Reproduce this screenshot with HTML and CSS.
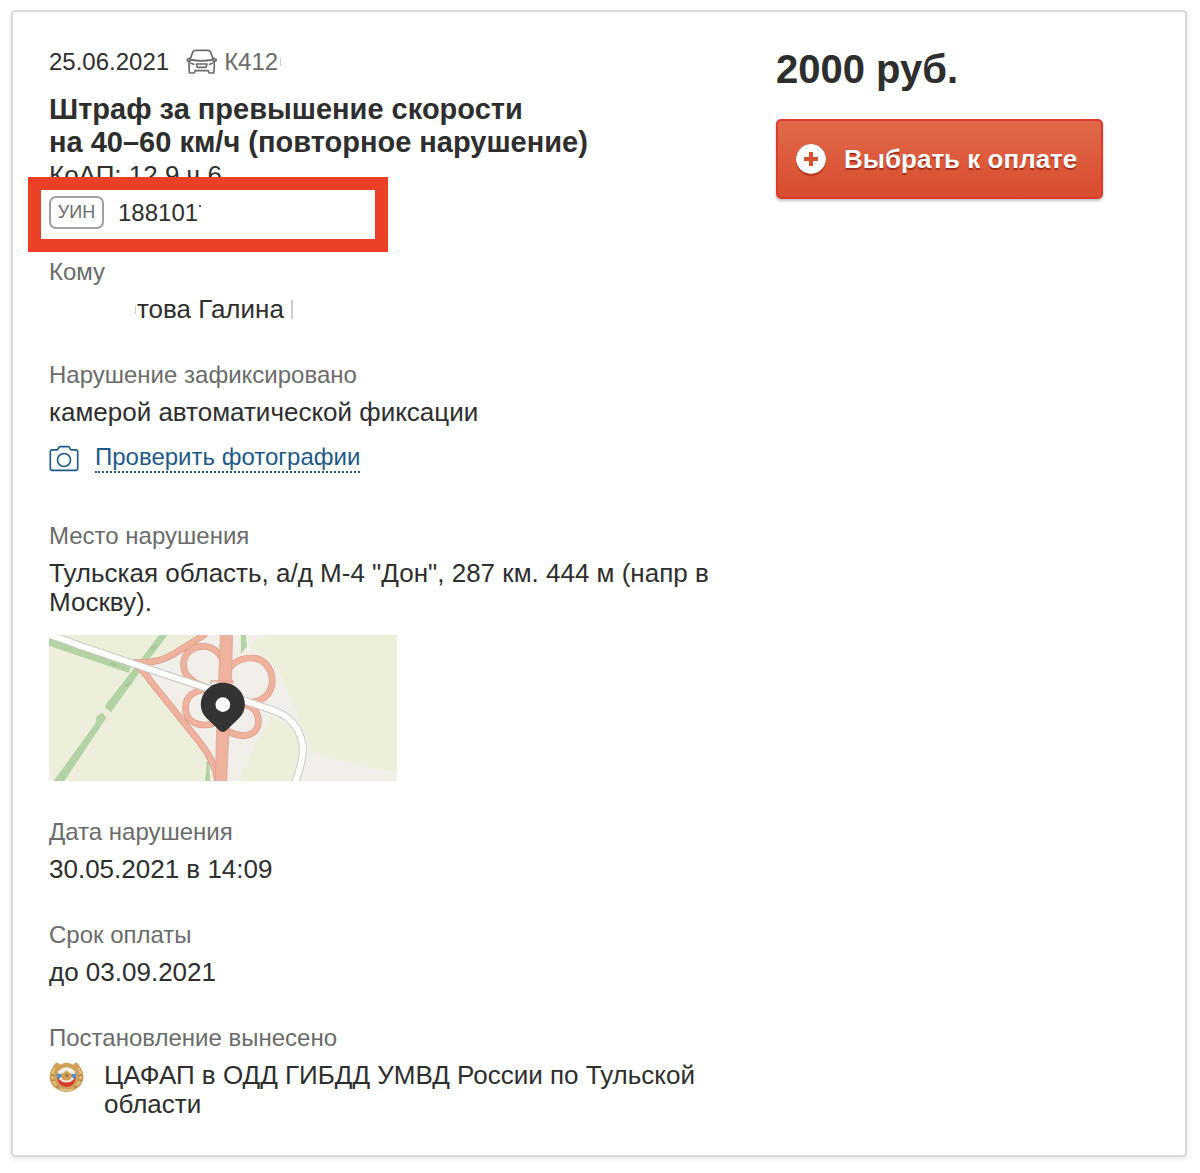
FILE: index.html
```html
<!DOCTYPE html>
<html lang="ru">
<head>
<meta charset="utf-8">
<meta name="viewport" content="width=device-width, initial-scale=1">
<title>Штраф ГИБДД</title>
<link rel="stylesheet" href="styles.css">
</head>
<body>
<main class="card">
  <section class="details">
    <div class="meta">
      <time class="date" datetime="2021-06-25">25.06.2021</time>
      <svg class="car" viewBox="556 139 93 75" aria-hidden="true">
        <g fill="none" stroke="#6b6b6b" stroke-width="5" stroke-linejoin="round" stroke-linecap="round">
          <path d="M568 170 L577 147 Q579 143 584 143 H622 Q627 143 629 147 L638 170"/>
          <path d="M569 171 Q603 178 637 171"/>
          <path d="M568 167 L560 170 V175 L568 177 M638 167 L646 170 V175 L638 177"/>
          <path d="M568 173 Q564 178 565 188 L566 209 Q566 211 569 211 H579 Q582 211 582 208 L583 204 H623 L624 208 Q624 211 627 211 H637 Q640 211 640 209 L641 188 Q642 178 638 173"/>
          <path d="M587 184 H619 L616 194 H590 Z"/>
          <path d="M571 182 L579 185 M635 182 L627 185"/>
        </g>
      </svg>
      <span class="plate">К412</span>
      <span class="mark mark-plate"></span>
    </div>
    <h1 class="title">Штраф за превышение скорости<br>на 40–60 км/ч (повторное нарушение)</h1>
    <p class="article">КоАП: 12.9 ч.6</p>
    <div class="uin">
      <span class="badge">УИН</span>
      <span class="number">188101</span>
      <span class="mark mark-uin"></span>
      <span class="frame"></span>
    </div>

    <dl class="facts">
      <div class="fact">
        <dt>Кому</dt>
        <dd class="person"><span class="mark mark-name"></span>това Галина&nbsp;<span class="initial"></span></dd>
      </div>
      <div class="fact fact-photo">
        <dt>Нарушение зафиксировано</dt>
        <dd>камерой автоматической фиксации</dd>
        <dd class="photo">
          <svg class="camera" viewBox="86 582 92 81" aria-hidden="true">
            <g fill="none" stroke="#1d5a87" stroke-width="5" stroke-linejoin="round">
              <path d="M96 596 H112 L117 588 Q118 586 121 586 H144 Q147 586 148 588 L153 596 H168 Q174 596 174 602 V653 Q174 659 168 659 H96 Q90 659 90 653 V602 Q90 596 96 596 Z"/>
              <circle cx="132" cy="627" r="20"/>
            </g>
          </svg>
          <a class="link" href="#photos">Проверить фотографии</a>
        </dd>
      </div>
      <div class="fact">
        <dt>Место нарушения</dt>
        <dd>Тульская область, а/д М-4 "Дон", 287 км. 444 м (напр в Москву).</dd>
        <dd class="place">
          <svg class="map" viewBox="28 30 1043 438" preserveAspectRatio="none" role="img" aria-label="Карта места нарушения">
            <rect x="28" y="30" width="1043" height="438" fill="#edefda"/>
            <path d="M300 115 L400 88 L490 30 H665 L628 66 L680 105 Q720 130 735 180 L795 320 L820 382 Q940 420 1071 442 V468 H605 V435 L622 420 L645 360 L668 325 L690 292 L735 295 L690 270 L650 330 L590 350 L560 468 H525 Q520 420 500 385 L300 130 Z" fill="#f2eeea"/>
            <path d="M560 468 L575 330 L650 330 L690 280 L692 292 L668 325 L645 360 L622 420 L605 435 V468 Z" fill="#f2eeea"/>
            <path d="M690 292 Q735 290 755 310 Q790 350 775 400 L762 468 H605 V435 L622 425 L645 360 Z" fill="#edefda"/>
            <path d="M28 440 L42 468 H28 Z" fill="#f2eeea"/>
            <g fill="#b4d3a4">
              <path d="M28 38 L275 123 L266 143 L28 62 Z"/>
              <path d="M358 30 H383 L306 133 L214 262 L197 249 L197 240 L275 140 Z"/>
              <path d="M170 274 L188 263 L200 278 L74 468 H42 L168 294 Z"/>
              <path d="M603 30 H618 L621 65 L603 88 Z"/>
              <path d="M500 410 L508 405 L511 468 H497 Z"/>
            </g>
            <g fill="none" stroke="#93b989" stroke-width="2">
              <path d="M210 117 l8 -4 l2 8 l8 -3 M221 123 a4 4 0 1 0 1 -6"/>
              <path d="M333 76 q-2 -10 5 -9 t0 9 M342 71 q-2 -10 5 -9 t0 9"/>
              <path d="M257 186 q-2 -10 5 -9 t0 9 M267 180 q-2 -10 5 -9 t0 9"/>
              <path d="M500 466 v-12 l6 -5"/>
            </g>
            <path d="M282 112 Q350 118 400 88 L498 27 M285 118 Q310 135 330 165 L480 352 Q530 415 534 475 M553 140 C556 95 525 64 490 64 C450 64 424 95 433 132 Q440 168 510 192 M560 150 C565 125 590 99 634 99 C672 99 698 132 697 169 C696 205 670 234 620 232 M510 193 C460 194 437 215 437 248 C437 285 470 310 520 296 M610 238 C640 240 656 265 656 290 C656 325 615 350 555 314" fill="none" stroke="#da9c86" stroke-width="20"/>
            <path d="M282 112 Q350 118 400 88 L498 27 M285 118 Q310 135 330 165 L480 352 Q530 415 534 475 M553 140 C556 95 525 64 490 64 C450 64 424 95 433 132 Q440 168 510 192 M560 150 C565 125 590 99 634 99 C672 99 698 132 697 169 C696 205 670 234 620 232 M510 193 C460 194 437 215 437 248 C437 285 470 310 520 296 M610 238 C640 240 656 265 656 290 C656 325 615 350 555 314" fill="none" stroke="#eeb29e" stroke-width="16"/>
            <path d="M542 26 H578 L575 170 L560 472 H526 L531 300 Z" fill="#eeb29e" stroke="#da9c86" stroke-width="2"/>
            <path d="M514 177 V168 H579 V177" fill="none" stroke="#e5aa99" stroke-width="4"/>
            <path d="M20 27 Q70 42 120 62 L390 153 L510 192 L700 256 C760 275 788 325 789 375 Q789 410 765 475" fill="none" stroke="#c5c5c1" stroke-width="23"/>
            <path d="M20 27 Q70 42 120 62 L390 153 L510 192 L700 256 C760 275 788 325 789 375 Q789 410 765 475" fill="none" stroke="#fff" stroke-width="18"/>
            <path d="M549 173 C512 173 483 202 483 239 Q483 261 500 279 L538 316 Q549 326 560 316 L598 279 Q615 261 615 239 C615 202 586 173 549 173 Z" fill="#333"/>
            <circle cx="549" cy="239" r="22" fill="#fff"/>
          </svg>
        </dd>
      </div>
      <div class="fact">
        <dt>Дата нарушения</dt>
        <dd>30.05.2021 в 14:09</dd>
      </div>
      <div class="fact">
        <dt>Срок оплаты</dt>
        <dd>до 03.09.2021</dd>
      </div>
      <div class="fact">
        <dt>Постановление вынесено</dt>
        <dd class="issuer">
          <svg class="emblem" viewBox="27 31 106 97" aria-hidden="true">
            <path d="M48 36 Q54 34 60 42 Q80 30 100 42 Q106 34 112 36 L120 46 Q128 58 130 70 Q134 84 127 97 Q120 112 108 116 Q96 127 80 125 Q64 127 52 116 Q40 112 33 97 Q26 84 30 70 Q32 58 40 46 Z" fill="#cfa25a"/>
            <path d="M44 52 Q28 82 50 106 M116 52 Q132 82 110 106 M60 116 Q80 124 100 116" fill="none" stroke="#e6c384" stroke-width="5"/>
            <path d="M33 72 l10 4 M34 90 l10 -2 M127 72 l-10 4 M126 90 l-10 -2 M50 112 l5 -6 M110 112 l-5 -6" stroke="#ab7734" stroke-width="4"/>
            <path d="M55 62 Q80 38 105 62 L108 76 H52 Z" fill="#f7efe4"/>
            <path d="M50 70 H110 L108 86 H52 Z" fill="#5b8cc4"/>
            <path d="M52 84 H108 Q104 108 80 110 Q56 108 52 84 Z" fill="#d63c30"/>
            <path d="M57 87 Q80 106 103 87 L98 80 H62 Z" fill="#f5ebdf"/>
            <path d="M64 72 L80 60 L97 72 L93 86 Q80 94 67 86 Z" fill="#d0a055"/>
            <path d="M74 74 L81 68 L88 76 L82 82 Z" fill="#a87d43"/>
          </svg>
          <span>ЦАФАП в ОДД ГИБДД УМВД России по Тульской области</span>
        </dd>
      </div>
    </dl>
  </section>

  <aside class="payment">
    <p class="price">2000 руб.</p>
    <button class="pay" type="button">
      <svg class="plus" viewBox="0 0 30 30" aria-hidden="true">
        <circle cx="15" cy="15" r="15" fill="#fff"/>
        <path d="M15 8 V22 M8 15 H22" stroke="#d9502f" stroke-width="4"/>
      </svg>
      <span>Выбрать к оплате</span>
    </button>
  </aside>
</main>
</body>
</html>
```
FILE: styles.css
```css
* {
  box-sizing: border-box;
}

body {
  margin: 0;
  padding: 10px 13px 16px 11px;
  background: #fff;
  color: #2e2e2e;
  font-family: "Liberation Sans", Arial, sans-serif;
  font-size: 24px;
  line-height: 30px;
}

p, h1, dl, dd {
  margin: 0;
}

svg {
  display: block;
  flex: none;
}

.card {
  display: grid;
  grid-template-columns: minmax(0, 1fr) 327px;
  gap: 36px;
  padding: 35px 82px 36px 36px;
  border: 2px solid #dadada;
  border-radius: 4px;
  box-shadow: 0 2px 4px rgba(0, 0, 0, 0.1);
}

.meta {
  display: flex;
  align-items: center;
}

.car {
  width: 31px;
  height: 25px;
  margin: 0 7px 2px 17px;
}

.plate {
  color: #6b6b6b;
}

/* Remnants of the masked personal data */
.mark {
  flex: none;
  width: 1px;
  height: 8px;
  background: #ccc;
}

.mark-plate {
  margin-left: 2px;
}

.title {
  margin-top: 16px;
  font-size: 29px;
  line-height: 33px;
}

.article {
  margin-top: 1px;
  font-size: 26px;
}

.uin {
  position: relative;
  display: flex;
  align-items: center;
  height: 33px;
  margin-top: 6px;
}

.badge {
  width: 55px;
  margin-right: 14px;
  border: 2px solid #a0a0a0;
  border-radius: 7px;
  color: #6b6b6b;
  font-size: 18px;
  line-height: 29px;
  text-align: center;
}

.mark-uin {
  width: 2px;
  height: 2px;
  margin: 0 0 14px 1px;
  background: #555;
}

.frame {
  position: absolute;
  top: -19px;
  left: -21px;
  width: 360px;
  height: 75px;
  border: 13px solid #eb4026;
}

.facts {
  display: flex;
  flex-direction: column;
  gap: 36px;
  margin-top: 28px;
}

.fact dt {
  margin-bottom: 8px;
  color: #6b6b6b;
}

.fact dd {
  font-size: 26px;
  line-height: 29px;
}

.fact-photo {
  margin-bottom: 12px;
}

.person {
  display: flex;
  align-items: center;
  padding-left: 86px;
}

.mark-name {
  margin-right: 1px;
}

.initial {
  width: 2px;
  height: 19px;
  background: #ccc;
}

.fact .photo {
  display: flex;
  align-items: center;
  gap: 16px;
  margin-top: 16px;
  font-size: 24px;
  line-height: 30px;
}

.camera {
  width: 30px;
  height: 27px;
}

.link {
  border-bottom: 2px dotted #1d5a87;
  color: #1d5a87;
  line-height: 28px;
  text-decoration: none;
}

.fact .place {
  margin-top: 18px;
}

.map {
  width: 348px;
  height: 146px;
}

.issuer {
  display: flex;
  gap: 20px;
}

.emblem {
  width: 35px;
  height: 32px;
}

.price {
  font-size: 40px;
  font-weight: bold;
  line-height: 44px;
}

.pay {
  display: flex;
  align-items: center;
  gap: 18px;
  width: 100%;
  height: 80px;
  margin-top: 28px;
  padding: 0 18px;
  border: 2px solid #db3a2c;
  border-radius: 5px;
  background: linear-gradient(#e06a4b, #d94c2d);
  box-shadow: 0 2px 3px rgba(0, 0, 0, 0.25);
  color: #fff;
  font: bold 26px "Liberation Sans", Arial, sans-serif;
  text-shadow: 0 2px 1px #a52d1a;
  white-space: nowrap;
}

.plus {
  width: 30px;
  height: 30px;
  border-radius: 50%;
  box-shadow: 0 2px 1px rgba(150, 35, 15, 0.6);
}
```
